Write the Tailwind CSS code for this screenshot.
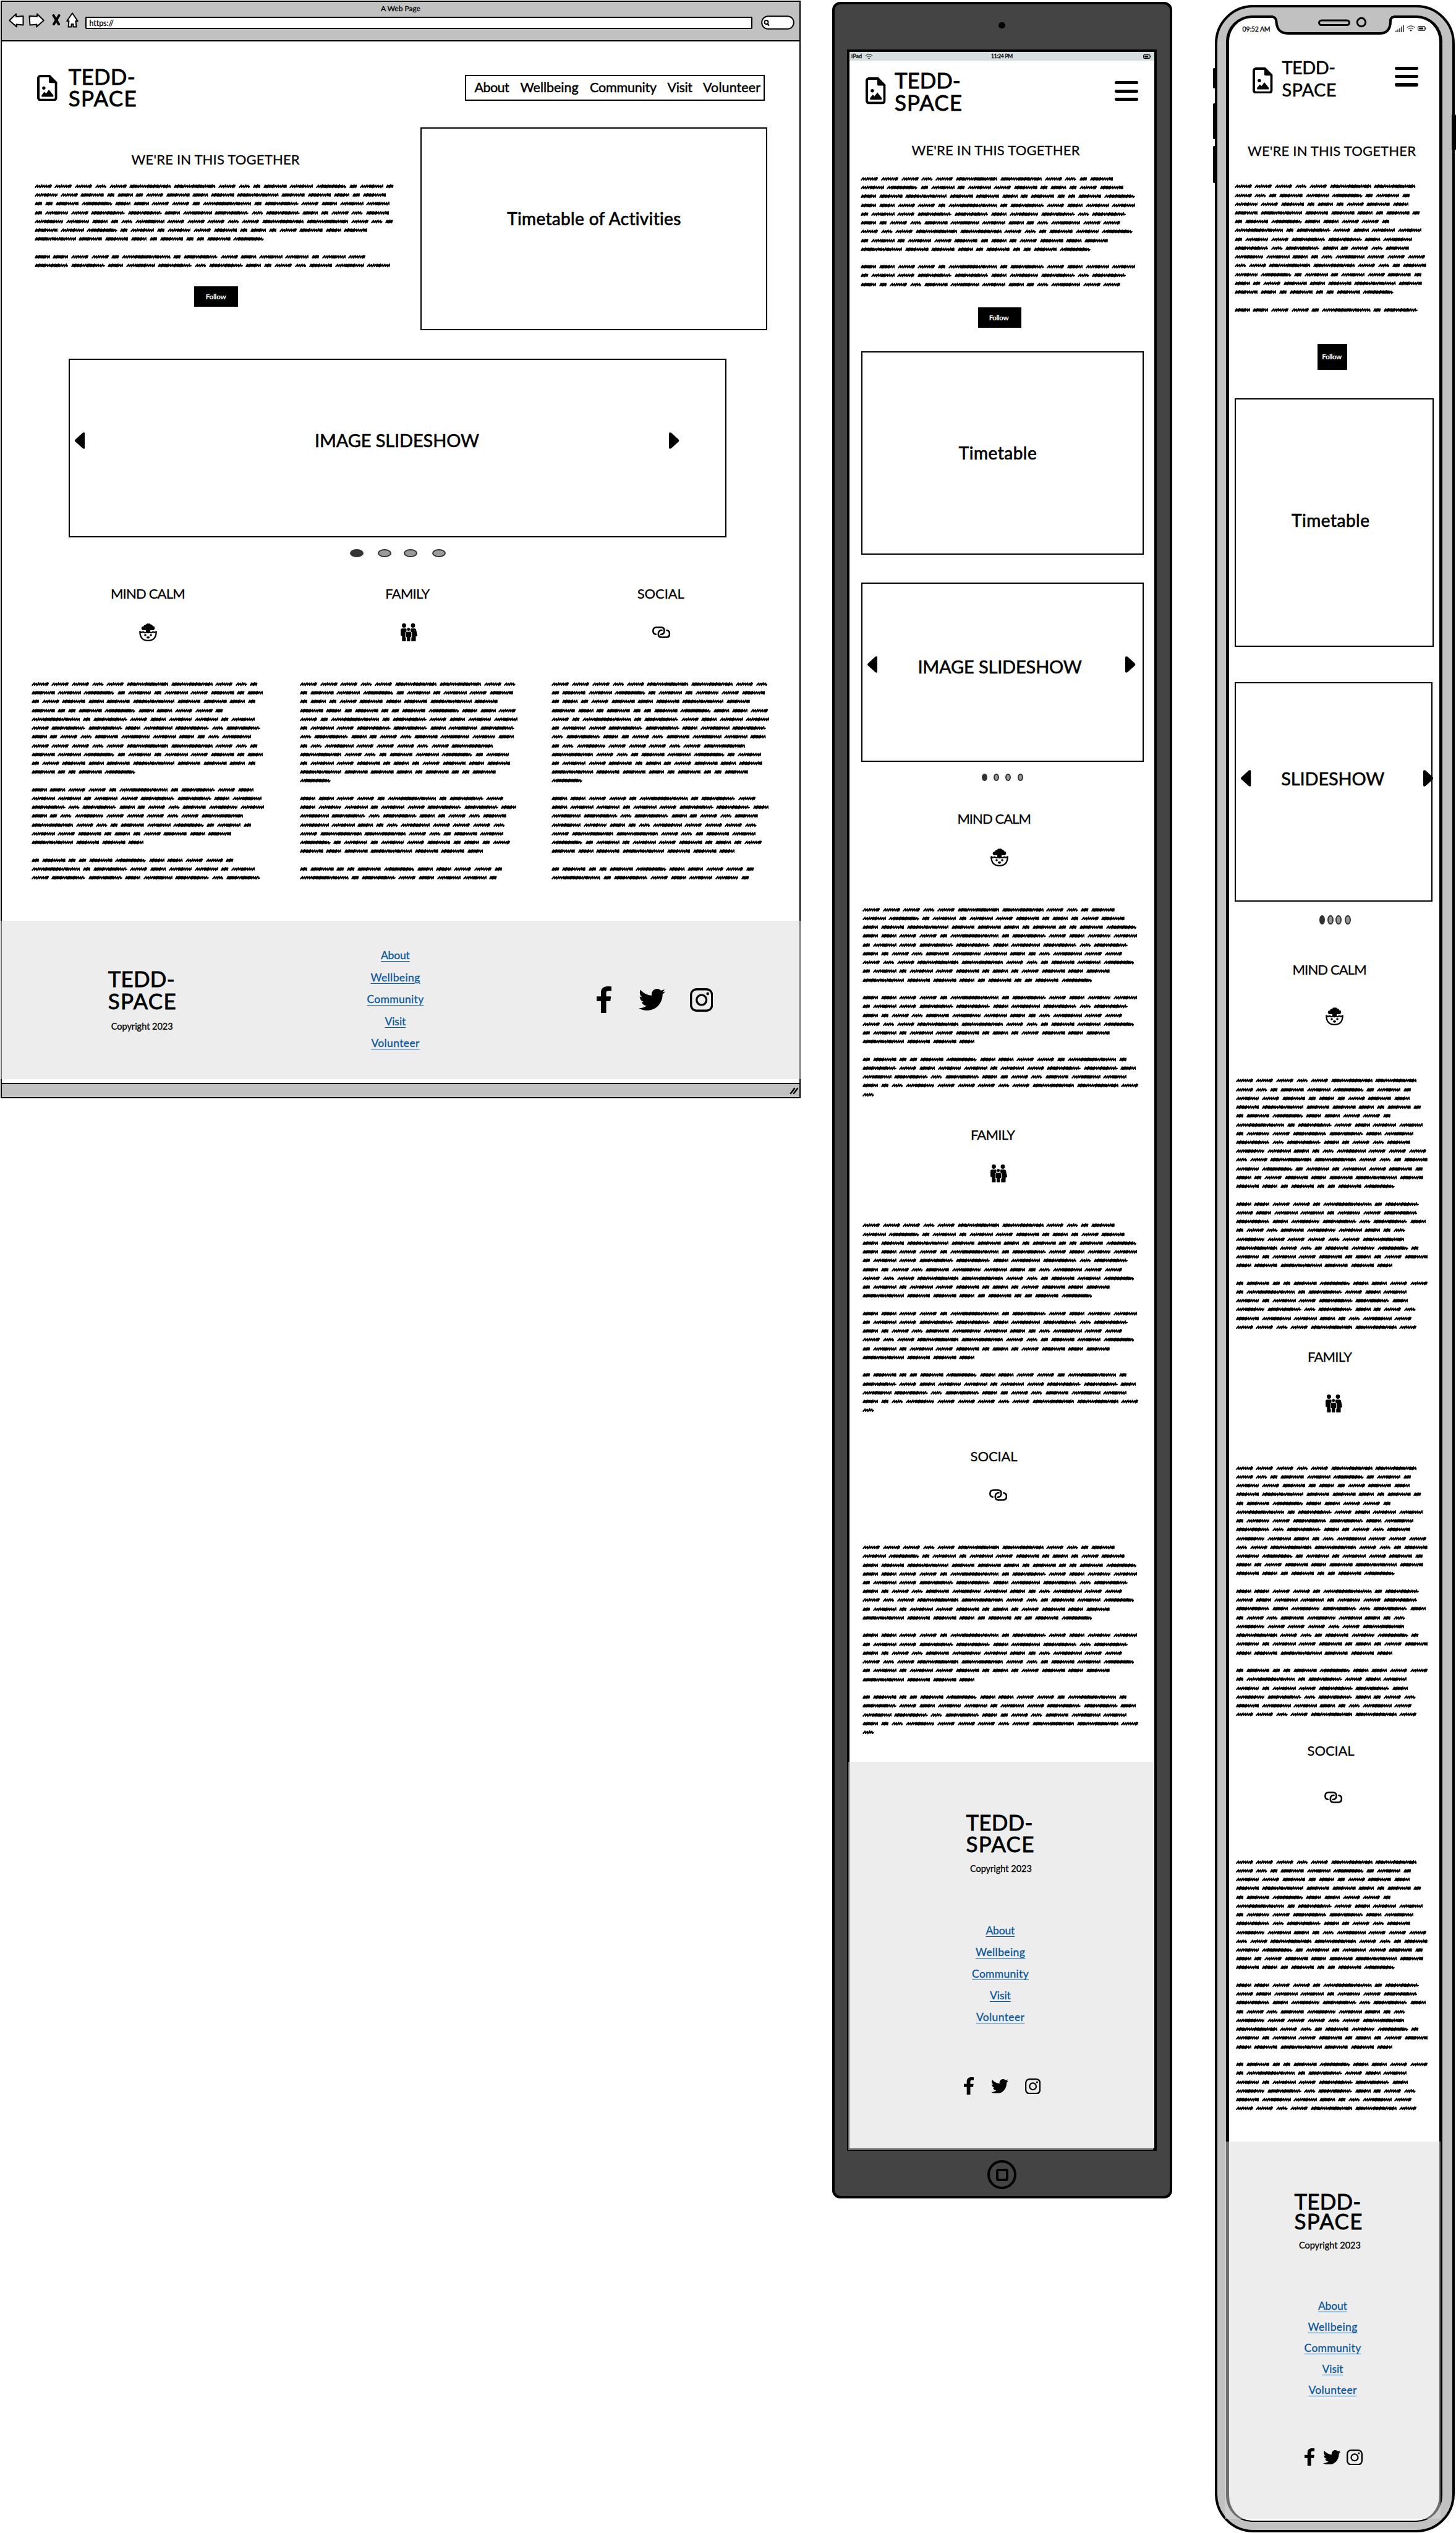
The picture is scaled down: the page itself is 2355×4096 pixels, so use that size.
<!DOCTYPE html>
<html lang="en">
<head>
<meta charset="utf-8">
<title>Tedd-Space wireframes</title>
<script src="https://cdn.jsdelivr.net/npm/@tailwindcss/browser@4"></script>
</head>
<body class="bg-white text-black font-['Lato',sans-serif] overflow-hidden [-webkit-text-stroke:0.3px]">

<!-- Icon sprite -->
<svg class="hidden">
  <symbol id="file" viewBox="0 0 36 48" preserveAspectRatio="none">
    <path d="M6 2.2H22L33.8 14.5V42a3.8 3.8 0 0 1-3.8 3.8H6A3.8 3.8 0 0 1 2.2 42V6A3.8 3.8 0 0 1 6 2.2Z" fill="none" stroke="currentColor" stroke-width="4.4"/>
    <path d="M21 1L35 15H23a2 2 0 0 1-2-2Z"/><circle cx="12" cy="24" r="3"/>
    <path d="M8 39v-2l5-6 3 3 5-7 8 10v2q0 1-1 1H9q-1 0-1-1Z"/>
  </symbol>
  <symbol id="left" viewBox="0 0 18 30" preserveAspectRatio="none"><path d="M1 13L14 .8Q18-1 18 3V27q0 4-4 2L1 17q-2-2 0-4Z"/></symbol>
  <symbol id="right" viewBox="0 0 18 30" preserveAspectRatio="none"><path d="M17 13L4 .8Q0-1 0 3V27q0 4 4 2L17 17q2-2 0-4Z"/></symbol>
  <symbol id="mind" viewBox="0 0 32 32">
    <path d="M12 16.500v-4.500H7.500a3.300 3.300 0 1 1 .7-6.500Q8.500 2.500 12 2.600Q13.500-.4 16.200.6Q19-.6 20.500 1.800Q24 2 24.300 5a3.300 3.300 0 0 1 .2 7H20V16.500l-4 1Z"/>
    <path d="M1.400 14.800Q1.800 30.700 16 30.700Q30.200 30.700 30.600 14.800L27.500 16.300 24.800 15.300 21.500 16.800 19 16 16 16.800 13 16 10.500 16.800 7.200 15.300 4.500 16.300Z" fill="none" stroke="currentColor" stroke-width="2.500" stroke-linejoin="round"/>
    <circle cx="11" cy="21" r="2"/><circle cx="21" cy="21" r="2"/><ellipse cx="16" cy="25.200" rx="2.900" ry="2"/>
  </symbol>
  <symbol id="family" viewBox="0 0 30 32">
    <circle cx="6" cy="3.800" r="3.800"/><circle cx="22" cy="3.800" r="3.800"/><circle cx="14" cy="10.700" r="2.700"/>
    <path d="M3 9h6q1.500 0 1.500 1.500v3.500Q8 15.500 8 18v6q0 1.200 1.300 1.500V32H3.500q-1 0-1-1V22.500L.7 22Q0 21.500 0 20V12Q0 9 3 9Z"/>
    <path d="M19 9h6q2 0 2.500 2L30 22.500l-3 1V31q0 1-1 1h-7v-6.500q1.200-.3 1.200-1.500v-6q0-2.500-2.700-4v-3.500Q17.500 9 19 9Z"/>
    <path d="M12 15h4q3 0 3 3v6l-2 .5V31q0 1-1 1h-4q-1 0-1-1v-6.500L9 24v-6q0-3 3-3Z"/>
  </symbol>
  <symbol id="link" viewBox="0 0 33 21">
    <g fill="none" stroke="currentColor" stroke-width="2.900" stroke-linecap="round">
      <path d="M6.500 14.200Q1.500 13.500 1.500 8Q1.500 1.500 8 1.500H16Q22 1.500 22 7.500Q22 14.500 15.500 14.500"/>
      <path d="M26.500 6.800Q31.500 7.500 31.500 13Q31.500 19.500 25 19.500H17Q11 19.500 11 13.500Q11 6.500 17.500 6.500"/>
    </g>
  </symbol>
  <symbol id="fb" viewBox="0 0 264 512" preserveAspectRatio="none"><path d="M76.700 512V283H0v-91h76.700v-71.700C76.700 42.400 124.300 0 193.800 0c33.300 0 61.900 2.500 70.200 3.600V85h-48.200c-37.800 0-45.100 18-45.100 44.300V192H256l-11.700 91h-73.600v229"/></symbol>
  <symbol id="tw" viewBox="0 48 512 416" preserveAspectRatio="none"><path d="M459.370 151.716c.325 4.548.325 9.097.325 13.645 0 138.720-105.583 298.558-298.558 298.558-59.452 0-114.680-17.219-161.137-47.106 8.447.974 16.568 1.299 25.340 1.299 49.055 0 94.213-16.568 130.274-44.832-46.132-.975-84.792-31.188-98.112-72.772 6.498.974 12.995 1.624 19.818 1.624 9.421 0 18.843-1.300 27.614-3.573-48.081-9.747-84.143-51.980-84.143-102.985v-1.299c13.969 7.797 30.214 12.670 47.431 13.319-28.264-18.843-46.781-51.005-46.781-87.391 0-19.492 5.197-37.360 14.294-52.954 51.655 63.675 129.300 105.258 216.365 109.807-1.624-7.797-2.599-15.918-2.599-24.040 0-57.828 46.782-104.934 104.934-104.934 30.213 0 57.502 12.670 76.670 33.137 23.715-4.548 46.456-13.320 66.599-25.340-7.798 24.366-24.366 44.833-46.132 57.827 21.117-2.273 41.584-8.122 60.426-16.243-14.292 20.791-32.161 39.308-52.628 54.253z"/></symbol>
  <symbol id="ig" viewBox="0 0 42 42" preserveAspectRatio="none">
    <rect x="1.900" y="1.900" width="38.200" height="38.200" rx="10" fill="none" stroke="currentColor" stroke-width="3.800"/>
    <circle cx="21" cy="21" r="8.900" fill="none" stroke="currentColor" stroke-width="3.700"/><circle cx="32.200" cy="9.900" r="2.600"/>
  </symbol>
  <symbol id="wifi" viewBox="0 0 14 10"><g fill="none" stroke="currentColor" stroke-width="1"><path d="M.7 3.500Q7-1.800 13.300 3.500M3 6Q7 2.500 11 6"/></g><circle cx="7" cy="8.300" r="1.200"/></symbol>
  <symbol id="battery" viewBox="0 0 15 8"><rect x=".7" y=".7" width="12" height="6.600" rx="1.500" fill="none" stroke="currentColor" stroke-width="1.200"/><rect x="2.500" y="2.500" width="7" height="3"/><path d="M13.800 2.500v3" stroke="currentColor" stroke-width="1.200"/></symbol>
</svg>

<main class="flex h-[4096px] w-[2355px] items-start">

  <!-- Desktop browser -->
  <section class="ml-px mt-px flex h-[1775px] w-[1294px] flex-none flex-col border-2 border-black">
    <header class="h-[63.5px] flex-none border-b-2 border-black bg-[#c1c1c1]">
      <div class="flex h-[17px] items-center justify-center pt-1 text-[12px]"><span data-w="64">A Web Page</span></div>
      <div class="flex h-[27px] items-center pl-[11.4px]">
        <svg class="h-[24px] w-[25px] -mt-px" viewBox="0 0 25 24"><path d="M1.200 12L12 1.500V6L23.500 5V19.500L12.500 18.500L13 22.500Z" fill="#fff" stroke="#000" stroke-width="2" stroke-linejoin="round"/></svg>
        <svg class="ml-[7px] h-[24px] w-[26px] -mt-px" viewBox="0 0 26 24"><path d="M24.800 12L14 1.500V5.500L1.500 5L2.500 19.500L13.500 18.500L13 22.500Z" fill="#fff" stroke="#000" stroke-width="2" stroke-linejoin="round"/></svg>
        <svg class="ml-[12px] h-[18px] w-[14px] -mt-[3px]" viewBox="0 0 14 18"><path d="M2.500 2L11 16M11.500 2L3 16" stroke="#000" stroke-width="4" stroke-linecap="round"/></svg>
        <svg class="ml-[8.500px] h-[25px] w-[20px] -mt-[3px]" viewBox="0 0 20 25"><path d="M10 1.200L18.700 14H15.500L16.500 23.500H11.500V19H8.500V23.500H3.500L4.500 14H1.200Z" fill="#fff" stroke="#000" stroke-width="2" stroke-linejoin="round"/></svg>
        <div class="ml-[11.600px] mt-[7px] flex h-[20px] w-[1078.500px] items-center rounded-[2px] border-2 border-black bg-white pl-[4px] pt-[3px] text-[12.500px]"><span data-w="39">https://</span></div>
        <svg class="ml-[14px] mt-[5px] h-[23px] w-[54px]" viewBox="0 0 54 23"><rect x="1.200" y="1.200" width="51.600" height="20.600" rx="10" fill="#fff" stroke="#000" stroke-width="2"/><circle cx="8.500" cy="11" r="3" fill="none" stroke="#000" stroke-width="1.800"/><path d="M10.500 13.500l2.500 3" stroke="#000" stroke-width="2"/></svg>
      </div>
    </header>

    <div class="mt-[40px] flex h-[71.200px] items-center pl-[57px] pr-[56px]">
      <svg class="h-[42.700px] w-[32.700px] flex-none"><use href="#file"/></svg>
      <h1 class="-mt-[2px] ml-[18px] flex flex-col items-start text-[35px] leading-[35.600px] [-webkit-text-stroke:0.8px]"><span data-w="108">TEDD-</span><span data-w="110">SPACE</span></h1>
      <nav class="ml-auto flex h-[42px] w-[485px] items-center border-2 border-black pl-[13.600px] text-[21.500px] leading-none [-webkit-text-stroke:0.5px]">
        <a data-w="56">About</a><a class="ml-[18px]" data-w="94">Wellbeing</a><a class="ml-[18.500px]" data-w="108">Community</a><a class="ml-[17.500px]" data-w="40.5">Visit</a><a class="ml-[17px]" data-w="93">Volunteer</a>
      </nav>
    </div>

    <div class="mt-[28.800px] flex h-[328px] flex-none">
      <div class="w-[677.300px] flex-none">
        <h2 class="ml-[209.600px] mt-[38.100px] h-[26px] text-[22px] leading-[26px]"><span data-w="272">WE'RE IN THIS TOGETHER</span></h2>
        <div class="ml-[52.500px] mt-[23.300px] w-[583.600px]" data-rows="10" data-copy></div>
        <button class="ml-[311px] mt-[26.300px] flex h-[33.500px] w-[70.500px] items-center justify-center bg-black text-[11.500px] font-bold text-white [-webkit-text-stroke:0px]"><span data-w="33">Follow</span></button>
      </div>
      <div class="flex h-[328px] w-[561px] items-center justify-center border-2 border-black pb-[34px] text-[28px] [-webkit-text-stroke:0.7px]"><span data-w="282">Timetable of Activities</span></div>
    </div>

    <div class="ml-[107.500px] mt-[46px] flex h-[288.500px] w-[1064.500px] flex-none items-center border-2 border-black pb-[25px] pl-[8px] text-[29px] [-webkit-text-stroke:0.6px]">
      <svg class="h-[27px] w-[16.500px] flex-none"><use href="#left"/></svg>
      <span class="ml-[372px]" data-w="266">IMAGE SLIDESHOW</span>
      <svg class="ml-[307.300px] h-[27px] w-[16.500px] flex-none"><use href="#right"/></svg>
    </div>
    <div class="ml-[562.800px] mt-[18.800px] flex h-[13.500px] flex-none">
      <i class="w-[22px] rounded-[50%] border-2 border-[#333] bg-[#333]"></i><i class="ml-[23.200px] w-[22px] rounded-[50%] border-2 border-[#333] bg-[#999]"></i><i class="ml-[20px] w-[22px] rounded-[50%] border-2 border-[#333] bg-[#999]"></i><i class="ml-[24px] w-[22px] rounded-[50%] border-2 border-[#333] bg-[#999]"></i>
    </div>

    <div class="ml-[47.800px] mt-[45.700px] flex flex-none text-[22px] leading-[26px]">
      <article class="w-[434.200px]">
        <h3 class="ml-[128.200px] h-[26px]"><span data-w="120.6">MIND CALM</span></h3>
        <svg class="ml-[174.200px] mt-[35px] size-[29px]"><use href="#mind"/></svg>
        <div class="mt-[61.900px] w-[384px]" data-rows="23" data-copy></div>
      </article>
      <article class="w-[407.500px]">
        <h3 class="ml-[138.300px] h-[26px]"><span data-w="72">FAMILY</span></h3>
        <svg class="ml-[163.500px] mt-[35px] h-[29px] w-[27.300px]"><use href="#family"/></svg>
        <div class="mt-[61.900px] w-[353.700px]" data-rows="23" data-copy></div>
      </article>
      <article class="w-[353.700px]">
        <h3 class="ml-[138.300px] h-[26px]"><span data-w="76">SOCIAL</span></h3>
        <svg class="ml-[162.200px] mt-[35px] h-[29px] w-[29.300px]"><use href="#link"/></svg>
        <div class="mt-[61.900px] w-[353.700px]" data-rows="23" data-copy></div>
      </article>
    </div>

    <footer class="relative -mx-[2px] mt-[63.200px] flex h-[255.300px] flex-none items-start bg-[#dcdcdc]/50">
      <div class="ml-[173.700px] w-[110px] pt-[74.500px]">
        <div class="flex flex-col items-start text-[35px] leading-[36.500px] [-webkit-text-stroke:0.8px]"><span data-w="108">TEDD-</span><span data-w="110">SPACE</span></div>
        <div class="ml-[5px] mt-[12.600px] text-[14.500px] leading-[20px]"><span data-w="100">Copyright 2023</span></div>
      </div>
      <div class="ml-[308.700px] flex w-[92px] flex-col items-center pt-[37.500px] text-[17.500px] leading-[35.570px] text-[#0a5799]">
        <a class="underline underline-offset-[3px]" data-w="47">About</a><a class="underline underline-offset-[3px]" data-w="80">Wellbeing</a><a class="underline underline-offset-[3px]" data-w="91.6">Community</a><a class="underline underline-offset-[3px]" data-w="34">Visit</a><a class="underline underline-offset-[3px]" data-w="78">Volunteer</a>
      </div>
      <div class="ml-[279.400px] flex items-center pt-[106px]">
        <svg class="h-[43px] w-[24px]"><use href="#fb"/></svg><svg class="ml-[44.300px] h-[35px] w-[43px]"><use href="#tw"/></svg><svg class="ml-[39.600px] h-[38px] w-[37.400px]"><use href="#ig"/></svg>
      </div>
    </footer>
    <div class="mt-auto flex h-[23px] flex-none justify-end border-t-2 border-black bg-[#c1c1c1] pr-[2px] pt-[5px]">
      <svg class="h-[12px] w-[14px]" viewBox="0 0 14 12"><path d="M2 10L8 2M7 10L13 2" stroke="#000" stroke-width="2.400" stroke-linecap="round"/></svg>
    </div>
  </section>

  <!-- Tablet -->
  <section class="ml-[50.500px] mt-[3px] flex h-[3552px] w-[550.500px] flex-none flex-col items-center rounded-[13px] border-[4.300px] border-black bg-[#444]">
    <i class="mt-[29.100px] h-[10px] w-[11px] flex-none rounded-full bg-black"></i>
    <div class="mt-[34.100px] flex h-[3397.500px] w-[501.300px] flex-none flex-col border-[4.500px] border-black bg-white">
      <div class="flex h-[14px] flex-none items-center bg-[#d6dde0] pl-[3px] pr-[5px] text-[8.500px] leading-none">
        <span data-w="17">iPad</span><svg class="ml-[5px] h-[9px] w-[13px]"><use href="#wifi"/></svg>
        <span class="ml-[191px]" data-w="35">11:24 PM</span><svg class="ml-auto h-[7px] w-[13px]"><use href="#battery"/></svg>
      </div>
      <div class="mt-[12.500px] flex h-[73px] flex-none items-center pl-[26.200px] pr-[26.900px]">
        <svg class="h-[43.500px] w-[32.600px] flex-none"><use href="#file"/></svg>
        <h1 class="ml-[14px] flex flex-col items-start text-[35px] leading-[36.400px] [-webkit-text-stroke:0.8px]"><span data-w="107">TEDD-</span><span data-w="109">SPACE</span></h1>
        <div class="ml-auto flex w-[38px] flex-col gap-[8.500px]"><i class="h-[5.200px] rounded-full bg-black"></i><i class="h-[5.200px] rounded-full bg-black"></i><i class="h-[5.200px] rounded-full bg-black"></i></div>
      </div>
      <h2 class="ml-[100.400px] mt-[46.500px] h-[26px] text-[22px] leading-[26px]"><span data-w="272">WE'RE IN THIS TOGETHER</span></h2>
      <div class="ml-[18.100px] mt-[25.700px] w-[447px]" data-rows="13" data-copy></div>
      <button class="ml-[207.800px] mt-[29.900px] flex h-[33.300px] w-[70.500px] flex-none items-center justify-center bg-black pr-[3px] text-[11.500px] font-bold text-white [-webkit-text-stroke:0px]"><span data-w="32">Follow</span></button>
      <div class="ml-[18.500px] mt-[38px] flex h-[328.500px] w-[457.300px] flex-none items-center justify-center border-2 border-black pr-[15px] text-[28px] [-webkit-text-stroke:0.7px]"><span data-w="126">Timetable</span></div>
      <div class="ml-[18.500px] mt-[45.500px] flex h-[290px] w-[457.300px] flex-none items-center border-2 border-black pb-[22px] pl-[8.300px] text-[29px] [-webkit-text-stroke:0.6px]">
        <svg class="-mt-[3px] h-[27px] w-[16.500px] flex-none"><use href="#left"/></svg>
        <span class="ml-[65px] mt-[3px]" data-w="265.5">IMAGE SLIDESHOW</span>
        <svg class="-mt-[3px] ml-[70.200px] h-[27px] w-[16.500px] flex-none"><use href="#right"/></svg>
      </div>
      <div class="ml-[214.200px] mt-[18.700px] flex h-[12.600px] flex-none">
        <i class="w-[9.200px] rounded-[50%] border-2 border-[#333] bg-[#333]"></i><i class="ml-[9.600px] w-[9.200px] rounded-[50%] border-2 border-[#333] bg-[#999]"></i><i class="ml-[9.700px] w-[9.200px] rounded-[50%] border-2 border-[#333] bg-[#999]"></i><i class="ml-[10.700px] w-[9.200px] rounded-[50%] border-2 border-[#333] bg-[#999]"></i>
      </div>
      <article class="mt-[47.700px] text-[22px] leading-[26px]">
        <h3 class="ml-[174.300px] h-[26px]"><span data-w="119.5">MIND CALM</span></h3>
        <svg class="ml-[227.800px] mt-[35px] size-[29px]"><use href="#mind"/></svg>
        <div class="ml-[20.800px] mt-[62.700px] w-[447px]" data-rows="22" data-copy></div>
      </article>
      <article class="mt-[44.800px] text-[22px] leading-[26px]">
        <h3 class="ml-[195.800px] h-[26px]"><span data-w="72">FAMILY</span></h3>
        <svg class="ml-[227.800px] mt-[35px] h-[29px] w-[27.300px]"><use href="#family"/></svg>
        <div class="ml-[20.800px] mt-[62.700px] w-[447px]" data-rows="22" data-copy></div>
      </article>
      <article class="mt-[54.800px] text-[22px] leading-[26px]">
        <h3 class="ml-[195.500px] h-[26px]"><span data-w="76">SOCIAL</span></h3>
        <svg class="ml-[226px] mt-[35px] h-[29px] w-[29.300px]"><use href="#link"/></svg>
        <div class="ml-[20.800px] mt-[62.700px] w-[447px]" data-rows="22" data-copy></div>
      </article>
      <footer class="relative -ml-[1.700px] mt-[40.700px] flex h-[628px] w-[493px] flex-none flex-col items-center bg-[#dcdcdc]/50 pt-[80.500px]">
        <div class="mr-[3px] flex w-[110px] flex-col items-start text-[35px] leading-[34.900px] [-webkit-text-stroke:0.8px]"><span data-w="108">TEDD-</span><span data-w="110">SPACE</span></div>
        <div class="mt-[12.300px] text-[14.500px] leading-[20px]"><span data-w="100">Copyright 2023</span></div>
        <div class="mr-[2px] mt-[72px] flex flex-col items-center text-[17.500px] leading-[35.200px] text-[#0a5799]">
          <a class="underline underline-offset-[3px]" data-w="47">About</a><a class="underline underline-offset-[3px]" data-w="80">Wellbeing</a><a class="underline underline-offset-[3px]" data-w="91.6">Community</a><a class="underline underline-offset-[3px]" data-w="34">Visit</a><a class="underline underline-offset-[3px]" data-w="78">Volunteer</a>
        </div>
        <div class="ml-[4px] mt-[79.900px] flex items-center">
          <svg class="h-[28.500px] w-[16.200px]"><use href="#fb"/></svg><svg class="ml-[28.400px] h-[23.500px] w-[28px]"><use href="#tw"/></svg><svg class="ml-[26.400px] h-[25.500px] w-[25.300px]"><use href="#ig"/></svg>
        </div>
      </footer>
    </div>
    <div class="mt-[15.600px] flex size-[46.800px] flex-none items-center justify-center rounded-full border-[4.500px] border-black"><i class="size-[20px] rounded-[4px] border-[4.500px] border-black"></i></div>
  </section>

  <!-- Phone -->
  <section class="relative ml-[68.700px] mt-[7.800px] h-[4087px] w-[388.300px] flex-none rounded-[62px] border-[4.400px] border-black bg-[#c1c1c1] pl-[14.300px] pt-[13.500px]">
    <i class="absolute -left-[7px] top-[98px] h-[33px] w-[6px] rounded-l-[2px] bg-black"></i>
    <i class="absolute -left-[7px] top-[155px] h-[58px] w-[6px] rounded-l-[2px] bg-black"></i>
    <i class="absolute -left-[7px] top-[224px] h-[60px] w-[6px] rounded-l-[2px] bg-black"></i>
    <i class="absolute -right-[6.500px] top-[173px] h-[58px] w-[7px] rounded-r-[2px] bg-black"></i>
    <svg class="absolute left-[90px] top-[13px] h-[34px] w-[200px]" viewBox="0 0 200 34">
      <path d="M0-2V2.500Q5 3 5.500 11Q7 29 24 29H172Q190 29 190 9Q190 3 195 2.500V-2Z" fill="#c1c1c1"/>
      <path d="M0 2.500Q5 3 5.500 11Q7 29 24 29H172Q190 29 190 9Q190 3 195 2.500" fill="none" stroke="#000" stroke-width="4"/>
      <rect x="74.500" y="8" width="49" height="7.500" rx="3.700" fill="none" stroke="#000" stroke-width="3"/>
      <ellipse cx="143" cy="11" rx="6.700" ry="6.700" fill="none" stroke="#000" stroke-width="3"/>
    </svg>
    <div class="flex h-[4052.500px] w-[350.100px] flex-col rounded-[42px] border-x-[5px] border-b-[2.700px] border-t-[4px] border-black bg-white">
      <div class="mt-[8.300px] flex h-[20px] flex-none items-center pl-[21.600px] text-[10.500px] leading-none">
        <span data-w="45">09:52 AM</span>
        <svg class="-mt-[3px] ml-[202px] h-[12px] w-[14px]" viewBox="0 0 14 12"><path d="M1 12V9.500M4 12V7.500M7 12V5.500M10 12V3M13 12V.5" stroke="#000" stroke-width="1.300"/></svg>
        <svg class="-mt-[3px] ml-[4px] h-[10px] w-[14px]"><use href="#wifi"/></svg>
        <svg class="-mt-[3px] ml-[4px] h-[8px] w-[14px]"><use href="#battery"/></svg>
      </div>
      <div class="mt-[33px] flex h-[72px] flex-none items-center pl-[38.200px] pr-[34.500px]">
        <svg class="mt-[7px] h-[42.700px] w-[32.600px] flex-none"><use href="#file"/></svg>
        <h1 class="ml-[14.700px] flex flex-col items-start text-[29px] leading-[36px] [-webkit-text-stroke:0.5px]"><span data-w="86.5">TEDD-</span><span data-w="88">SPACE</span></h1>
        <div class="-mt-[6px] ml-auto flex w-[38px] flex-col gap-[8px]"><i class="h-[5.400px] rounded-full bg-black"></i><i class="h-[5.400px] rounded-full bg-black"></i><i class="h-[5.400px] rounded-full bg-black"></i></div>
      </div>
      <h2 class="ml-[30px] mt-[68px] h-[26px] text-[22px] leading-[26px]"><span data-w="272">WE'RE IN THIS TOGETHER</span></h2>
      <div class="ml-[8.600px] mt-[37.700px] w-[314.500px]" data-rows="15" data-copy></div>
      <button class="ml-[142.600px] mt-[48.400px] flex h-[41.700px] w-[48.500px] flex-none items-center justify-center bg-black pr-[1px] text-[11.500px] font-bold text-white [-webkit-text-stroke:0px]"><span data-w="32">Follow</span></button>
      <div class="ml-[9px] mt-[46.500px] flex h-[402px] w-[322px] flex-none items-center justify-center border-2 border-black pb-[9px] pr-[12px] text-[28px] [-webkit-text-stroke:0.7px]"><span data-w="126">Timetable</span></div>
      <div class="ml-[9px] mt-[56.200px] flex h-[355.300px] w-[320.300px] flex-none items-center border-2 border-black pb-[43px] pl-[8.300px] text-[29px] [-webkit-text-stroke:0.6px]">
        <svg class="h-[27px] w-[16.500px] flex-none"><use href="#left"/></svg>
        <span class="ml-[48.500px]" data-w="167">SLIDESHOW</span>
        <svg class="ml-[62.400px] h-[27px] w-[16.500px] flex-none"><use href="#right"/></svg>
      </div>
      <div class="ml-[146px] mt-[21.900px] flex h-[15px] flex-none">
        <i class="w-[9.500px] rounded-[50%] border-2 border-[#333] bg-[#333]"></i><i class="ml-[4px] w-[9.500px] rounded-[50%] border-2 border-[#333] bg-[#999]"></i><i class="ml-[3.200px] w-[9.500px] rounded-[50%] border-2 border-[#333] bg-[#999]"></i><i class="ml-[5.800px] w-[9.500px] rounded-[50%] border-2 border-[#333] bg-[#999]"></i>
      </div>
      <article class="mt-[60px] text-[22px] leading-[26px]">
        <h3 class="ml-[102.600px] h-[26px]"><span data-w="120">MIND CALM</span></h3>
        <svg class="ml-[156px] mt-[48px] size-[29px]"><use href="#mind"/></svg>
        <div class="ml-[10.600px] mt-[82.600px] w-[314.500px]" data-rows="29" data-copy></div>
      </article>
      <article class="mt-[27.900px] text-[22px] leading-[26px]">
        <h3 class="ml-[127px] h-[26px]"><span data-w="72">FAMILY</span></h3>
        <svg class="ml-[156px] mt-[48px] h-[29px] w-[27.300px]"><use href="#family"/></svg>
        <div class="ml-[10.600px] mt-[82.600px] w-[314.500px]" data-rows="29" data-copy></div>
      </article>
      <article class="mt-[38.600px] text-[22px] leading-[26px]">
        <h3 class="ml-[126.600px] h-[26px]"><span data-w="76">SOCIAL</span></h3>
        <svg class="ml-[154.500px] mt-[48px] h-[29px] w-[29.300px]"><use href="#link"/></svg>
        <div class="ml-[10.600px] mt-[82.600px] w-[314.500px]" data-rows="29" data-copy></div>
      </article>
      <footer class="relative -ml-[6.800px] mt-[47px] flex h-[610px] w-[348.400px] flex-none flex-col items-center bg-[#dcdcdc]/50 pt-[79.300px]">
        <div class="mr-[14px] flex w-[110px] flex-col items-start text-[35px] leading-[32.500px] [-webkit-text-stroke:0.8px]"><span data-w="108">TEDD-</span><span data-w="110">SPACE</span></div>
        <div class="mr-[9px] mt-[13px] text-[14.500px] leading-[20px]"><span data-w="100">Copyright 2023</span></div>
        <div class="mt-[71.400px] flex flex-col items-center text-[17.500px] leading-[33.930px] text-[#0a5799]">
          <a class="underline underline-offset-[3px]" data-w="47">About</a><a class="underline underline-offset-[3px]" data-w="80">Wellbeing</a><a class="underline underline-offset-[3px]" data-w="91.6">Community</a><a class="underline underline-offset-[3px]" data-w="34">Visit</a><a class="underline underline-offset-[3px]" data-w="78">Volunteer</a>
        </div>
        <div class="ml-[4px] mt-[77.500px] flex items-center">
          <svg class="h-[28.400px] w-[16.400px]"><use href="#fb"/></svg><svg class="ml-[13.600px] h-[23.600px] w-[28.500px]"><use href="#tw"/></svg><svg class="ml-[9.500px] h-[25.500px] w-[26px]"><use href="#ig"/></svg>
        </div>
      </footer>
    </div>
  </section>
</main>

<script>
  // Word kinds: [width, stroke texture] - D is a dense scribble, L a loose one.
  const KIND = {
    a: [12.5, 'DD'], b: [18.7, 'LLL'], c: [25.2, 'DDL'], d: [28.2, 'LLLD'],
    e: [37.8, 'DDLLD'], z: [37.8, 'LLDLL'], f: [46.7, 'LLDDLL'], g: [49.8, 'LDDDDL'],
    h: [54.9, 'DDLDDLL'], i: [67.3, 'DDLLDDDLDL'], y: [67.3, 'DDDLDLDLLL'], j: [78.6, 'LLLDDDDLDLLL']
  };
  const CYCLE = 'dddbdiidbaezgaza' + 'zdeacadeceyeecae' + 'aaegccddajahdczz' + 'azdhhcfhbhcadbe' + 'fzcabf';
  const N = CYCLE.length;
  const words = (from, n) => Array.from({ length: n }, (_, k) => CYCLE[(from + k) % N]);
  const endFirst = CYCLE.indexOf('aaeg') + 4;
  const endSecond = CYCLE.indexOf('yeec') + 4;
  const PARAS = [words(0, N + endFirst), words(endFirst, N - endFirst + endSecond), words(endSecond, N - endSecond + 5)];

  function scribble(kind) {
    const [w, tex] = KIND[kind];
    let x = 1.2, d = 'M1.2 9', n = 0;
    while (x < w - 3) {
      const dense = tex[Math.min(tex.length - 1, Math.floor(x / w * tex.length))] === 'D';
      const step = dense ? 2.3 : 3.7, wob = [0, .5, -.3, .2][n++ % 4];
      d += `L${(x + (dense ? 1.9 : 3)).toFixed(1)} ${(5.3 + wob).toFixed(1)}`;
      x += step;
      d += `L${x.toFixed(1)} ${(9 + wob).toFixed(1)}`;
    }
    d += `L${(w - 1).toFixed(1)} ${tex.endsWith('D') ? 5.6 : 7.6}`;
    return `<svg class="h-[14.235px] flex-none" width="${w}" viewBox="0 0 ${w} 14.235"><path d="${d}" fill="none" stroke="#000" stroke-width="2" stroke-linecap="round" stroke-linejoin="round"/></svg>`;
  }

  document.querySelectorAll('[data-copy]').forEach(el => {
    el.classList.add('overflow-hidden', 'flex-none');
    el.style.height = el.dataset.rows * 14.235 + 'px';
    // The second paragraph's successor closes with a two-word line: "d b".
    const last = [...PARAS[2].slice(0, N - endSecond), ...'dddbdiidb'];
    el.innerHTML = [PARAS[0], PARAS[1], last].map(p => `<div class="mb-[14.235px] flex flex-wrap gap-x-[4.500px]">${p.map(scribble).join('')}</div>`).join('');
  });

  // Letter-space each label to its width; repeated once styles and fonts have settled.
  const labels = [...document.querySelectorAll('[data-w]')];
  labels.forEach(el => el.classList.add('inline-block', 'whitespace-nowrap', 'flex-none'));
  function fit() {
    labels.forEach(el => { el.style.letterSpacing = '0px'; el.style.marginRight = '0px'; });
    const widths = labels.map(el => el.getBoundingClientRect().width);
    labels.forEach((el, k) => {
      const extra = (el.dataset.w - widths[k]) / (el.textContent.length - 1);
      el.style.letterSpacing = extra + 'px';
      el.style.marginRight = -extra + 'px';
    });
  }
  fit();
  addEventListener('load', fit);
  document.fonts.ready.then(fit);
  requestAnimationFrame(() => requestAnimationFrame(fit));
  [30, 120, 300].forEach(t => setTimeout(fit, t));
  new MutationObserver(fit).observe(document.head, { childList: true });
</script>
</body>
</html>
